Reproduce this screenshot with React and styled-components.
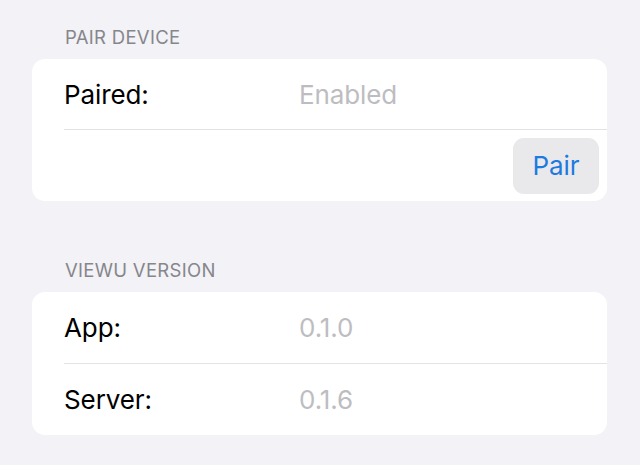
import React from "react";
import styled, { createGlobalStyle } from "styled-components";

const Global = createGlobalStyle`
  html, body { margin: 0; padding: 0; background: #f2f2f7; }
  body { font-family: Inter, "Noto Sans", sans-serif; -webkit-font-smoothing: antialiased; }
`;

const Page = styled.div`
  padding: 25px 33px 0 32px;
  display: flex;
  flex-direction: column;
`;

const Section = styled.section`
  display: flex;
  flex-direction: column;
  margin-bottom: ${(p) => p.$mb || 0}px;
`;

const Header = styled.div`
  font-size: 18.5px;
  letter-spacing: 0.3px;
  color: #86868b;
  text-transform: uppercase;
  padding-left: 33px;
  height: 24px;
  line-height: 24px;
  margin-bottom: 10px;
`;

const Card = styled.div`
  background: #ffffff;
  border-radius: 13px;
  overflow: hidden;
  display: flex;
  flex-direction: column;
`;

const Row = styled.div`
  display: flex;
  align-items: center;
  justify-content: ${(p) => (p.$end ? "flex-end" : "flex-start")};
  height: ${(p) => p.$h || 70}px;
  margin-left: 32px;
  padding-right: ${(p) => (p.$end ? 8 : 0)}px;
  border-bottom: ${(p) => (p.$divider ? "1.5px solid #e3e3e6" : "none")};
`;

const Label = styled.div`
  font-size: 26px;
  color: #000;
  width: 235px;
  letter-spacing: -0.1px;
`;

const Value = styled.div`
  font-size: 26px;
  color: #bdbdc1;
  letter-spacing: -0.1px;
`;

const Button = styled.button`
  border: none;
  background: #e9e9eb;
  color: #1d7ae0;
  font-family: inherit;
  font-size: 26px;
  border-radius: 11px;
  width: 86px;
  height: 56px;
  padding: 0;
  letter-spacing: -0.1px;
`;

export default function App() {
  return (
    <>
      <Global />
      <Page>
        <Section $mb={57}>
          <Header>Pair Device</Header>
          <Card>
            <Row $divider $h={70}>
              <Label>Paired:</Label>
              <Value>Enabled</Value>
            </Row>
            <Row $end $h={71}>
              <Button>Pair</Button>
            </Row>
          </Card>
        </Section>
        <Section>
          <Header>Viewu Version</Header>
          <Card>
            <Row $divider $h={71}>
              <Label>App:</Label>
              <Value>0.1.0</Value>
            </Row>
            <Row $h={71}>
              <Label>Server:</Label>
              <Value>0.1.6</Value>
            </Row>
          </Card>
        </Section>
      </Page>
    </>
  );
}
